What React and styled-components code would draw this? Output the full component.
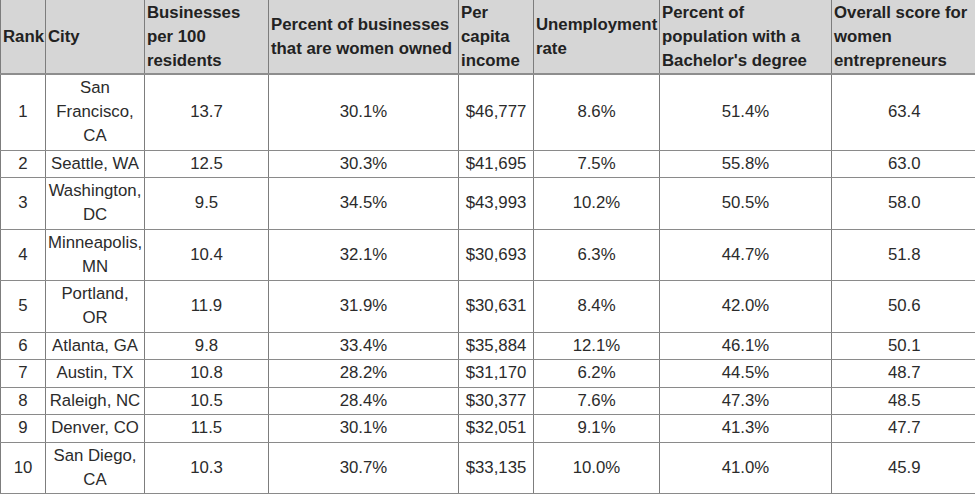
import styled, { createGlobalStyle } from 'styled-components';

const GlobalStyle = createGlobalStyle`
  body {
    margin: 0;
    background: #fff;
    font-family: "Liberation Sans", Arial, sans-serif;
  }
`;

const Page = styled.div`
  width: 975px;
  height: 496px;
  overflow: hidden;
`;

const Table = styled.table`
  border-collapse: collapse;
  table-layout: fixed;
  width: 976px;
  font-size: 16.8px;
  line-height: 24px;
  color: #2b2b2b;
`;

const HeadCell = styled.th`
  background: #d6d6d6;
  font-weight: bold;
  text-align: left;
  vertical-align: middle;
  padding: 0.5px 2px;
  color: #222;
  border-left: 1px solid #7d7d7d;
  border-bottom: 2px solid #8e8e8e;
  white-space: normal;
`;

const Cell = styled.td`
  text-align: center;
  vertical-align: middle;
  padding: 1.25px 2px;
  border-left: 1px solid #7d7d7d;
  border-bottom: 1px solid #8a8a8a;
`;

const columns = [
  { label: 'Rank', width: 45 },
  { label: 'City', width: 99 },
  { label: 'Businesses per 100 residents', width: 124 },
  { label: 'Percent of businesses that are women owned', width: 190 },
  { label: 'Per capita income', width: 75 },
  { label: 'Unemployment rate', width: 126 },
  { label: "Percent of population with a Bachelor's degree", width: 172 },
  { label: 'Overall score for women entrepreneurs', width: 145 },
];

const rows = [
  ['1', 'San Francisco, CA', '13.7', '30.1%', '$46,777', '8.6%', '51.4%', '63.4'],
  ['2', 'Seattle, WA', '12.5', '30.3%', '$41,695', '7.5%', '55.8%', '63.0'],
  ['3', 'Washington, DC', '9.5', '34.5%', '$43,993', '10.2%', '50.5%', '58.0'],
  ['4', 'Minneapolis, MN', '10.4', '32.1%', '$30,693', '6.3%', '44.7%', '51.8'],
  ['5', 'Portland, OR', '11.9', '31.9%', '$30,631', '8.4%', '42.0%', '50.6'],
  ['6', 'Atlanta, GA', '9.8', '33.4%', '$35,884', '12.1%', '46.1%', '50.1'],
  ['7', 'Austin, TX', '10.8', '28.2%', '$31,170', '6.2%', '44.5%', '48.7'],
  ['8', 'Raleigh, NC', '10.5', '28.4%', '$30,377', '7.6%', '47.3%', '48.5'],
  ['9', 'Denver, CO', '11.5', '30.1%', '$32,051', '9.1%', '41.3%', '47.7'],
  ['10', 'San Diego, CA', '10.3', '30.7%', '$33,135', '10.0%', '41.0%', '45.9'],
];

export default function App() {
  return (
    <Page>
      <GlobalStyle />
      <Table>
        <colgroup>
          {columns.map((c) => (
            <col key={c.label} style={{ width: c.width }} />
          ))}
        </colgroup>
        <thead>
          <tr>
            {columns.map((c) => (
              <HeadCell key={c.label}>{c.label}</HeadCell>
            ))}
          </tr>
        </thead>
        <tbody>
          {rows.map((r) => (
            <tr key={r[0]}>
              {r.map((v, i) => (
                <Cell key={i}>{v}</Cell>
              ))}
            </tr>
          ))}
        </tbody>
      </Table>
    </Page>
  );
}
